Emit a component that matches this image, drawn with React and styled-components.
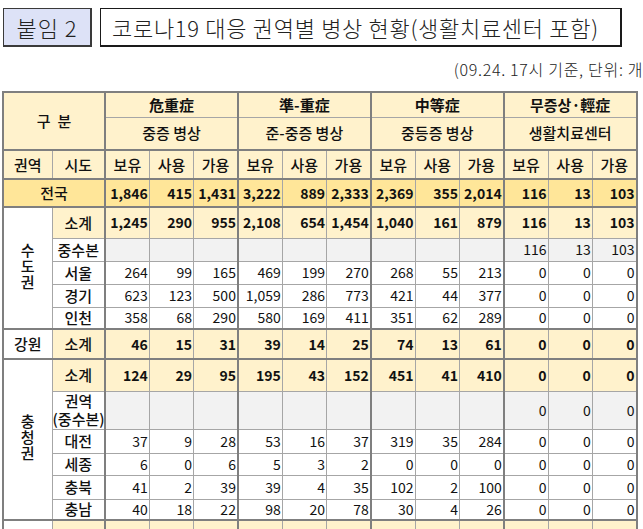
import styled, { createGlobalStyle } from 'styled-components';

const GlobalStyle = createGlobalStyle`
  html, body {
    margin: 0;
    padding: 0;
    background: #fff;
    overflow: hidden;
  }
  body {
    font-family: "Noto Sans CJK KR", "Noto Sans", sans-serif;
    color: #000;
  }
`;

const Page = styled.div`
  width: 643px;
  height: 529px;
  overflow: hidden;
`;

const TitleBar = styled.div`
  display: flex;
  gap: 8px;
  padding: 8px 0 0 3px;
`;

const Tag = styled.div`
  width: 89px;
  height: 39px;
  box-sizing: border-box;
  background: #dde2f7;
  border: 1px solid #3a3a3a;
  border-right-width: 2px;
  border-bottom-width: 2px;
  display: flex;
  align-items: center;
  justify-content: center;
  font-size: 22px;
  font-weight: 300;
  color: #222;
  letter-spacing: 1px;
`;

const Title = styled.div`
  width: 522px;
  height: 39px;
  box-sizing: border-box;
  background: #fff;
  border: 1px solid #1a1a1a;
  border-right-width: 2px;
  border-bottom-width: 2px;
  display: flex;
  align-items: center;
  padding-left: 11px;
  font-size: 22px;
  font-weight: 300;
  color: #222;
  letter-spacing: 0.7px;
  white-space: nowrap;
`;

const Note = styled.div`
  height: 44px;
  display: flex;
  align-items: center;
  justify-content: flex-end;
  margin-right: -6px;
  box-sizing: border-box;
  font-size: 16px;
  font-weight: 300;
  color: #222;
  white-space: nowrap;
  letter-spacing: 0.7px;
`;

const Table = styled.table`
  margin-left: 2px;
  border-collapse: collapse;
  table-layout: fixed;
  width: 634px;
  border: 2px solid #7f7f7f;
`;

const Col = styled.col`
  width: ${({ $w }) => $w}px;
`;

const Row = styled.tr`
  height: ${({ $h }) => $h}px;
`;

const BG = {
  head: '#fff2cc',
  total: '#ffe699',
  sub: '#fff2cc',
  hq: '#f2f2f2',
  plain: '#ffffff',
};

const Cell = styled.td`
  padding: 0 ${({ $num }) => ($num ? '1px' : '0')} 0 0;
  border: 1px solid #a6a6a6;
  border-left: ${({ $gl }) => ($gl ? '2px solid #7f7f7f' : '1px solid #a6a6a6')};
  border-top: ${({ $gt }) => ($gt ? '2px solid #7f7f7f' : '1px solid #a6a6a6')};
  background: ${({ $bg }) => BG[$bg || 'plain']};
  text-align: ${({ $num }) => ($num ? 'right' : 'center')};
  font-size: ${({ $num }) => ($num ? '14px' : '15px')};
  font-weight: ${({ $b, $num }) => ($b ? 700 : $num ? 400 : 500)};
  line-height: 1.2;
  white-space: nowrap;
  overflow: visible;
  color: #111;
`;

const VerticalName = styled.span`
  writing-mode: vertical-lr;
  text-orientation: upright;
  letter-spacing: 1px;
  line-height: 1;
`;

const TwoLine = styled.span`
  display: inline-block;
  line-height: 18px;
  white-space: pre;
`;

const GROUPS = [
  { han: '危重症', ko: '중증 병상' },
  { han: '準-重症', ko: '준-중증 병상' },
  { han: '中等症', ko: '중등증 병상' },
  { han: '무증상·輕症', ko: '생활치료센터' },
];

const blank9 = Array(9).fill('');

const REGIONS = [
  {
    name: '수도권',
    vertical: true,
    rows: [
      { label: '소계', kind: 'sub', h: 31, v: ['1,245', '290', '955', '2,108', '654', '1,454', '1,040', '161', '879', '116', '13', '103'] },
      { label: '중수본', kind: 'hq', h: 23, v: [...blank9, '116', '13', '103'] },
      { label: '서울', h: 23, v: ['264', '99', '165', '469', '199', '270', '268', '55', '213', '0', '0', '0'] },
      { label: '경기', h: 23, v: ['623', '123', '500', '1,059', '286', '773', '421', '44', '377', '0', '0', '0'] },
      { label: '인천', h: 22, v: ['358', '68', '290', '580', '169', '411', '351', '62', '289', '0', '0', '0'] },
    ],
  },
  {
    name: '강원',
    rows: [
      { label: '소계', kind: 'sub', h: 30, v: ['46', '15', '31', '39', '14', '25', '74', '13', '61', '0', '0', '0'] },
    ],
  },
  {
    name: '충청권',
    vertical: true,
    rows: [
      { label: '소계', kind: 'sub', h: 32, v: ['124', '29', '95', '195', '43', '152', '451', '41', '410', '0', '0', '0'] },
      { label: '권역\n(중수본)', kind: 'hq', h: 38, v: [...blank9, '0', '0', '0'] },
      { label: '대전', h: 24, v: ['37', '9', '28', '53', '16', '37', '319', '35', '284', '0', '0', '0'] },
      { label: '세종', h: 22, v: ['6', '0', '6', '5', '3', '2', '0', '0', '0', '0', '0', '0'] },
      { label: '충북', h: 24, v: ['41', '2', '39', '39', '4', '35', '102', '2', '100', '0', '0', '0'] },
      { label: '충남', h: 21, v: ['40', '18', '22', '98', '20', '78', '30', '4', '26', '0', '0', '0'] },
    ],
  },
  {
    name: '',
    rows: [{ label: '', kind: 'sub', h: 30, v: Array(12).fill('') }],
  },
];

function DataCells({ values, kind, bold, top }) {
  return values.map((val, i) => (
    <Cell key={i} $num $b={bold} $bg={kind === 'sub' ? 'sub' : kind} $gl={i % 3 === 0} $gt={top}>
      {val}
    </Cell>
  ));
}

export default function App() {
  return (
    <Page>
      <GlobalStyle />
      <TitleBar>
        <Tag>붙임 2</Tag>
        <Title>코로나19 대응 권역별 병상 현황(생활치료센터 포함)</Title>
      </TitleBar>
      <Note>(09.24. 17시 기준, 단위: 개)</Note>
      <Table>
        <colgroup>
          <Col $w={49} />
          <Col $w={53} />
          {Array.from({ length: 12 }, (_, i) => (
            <Col key={i} $w={44.3} />
          ))}
        </colgroup>
        <thead>
          <Row $h={25}>
            <Cell as="th" colSpan={2} rowSpan={2} $bg="head">
              구&nbsp;&nbsp;분
            </Cell>
            {GROUPS.map(g => (
              <Cell as="th" key={g.han} colSpan={3} $bg="head" $gl $b>
                {g.han}
              </Cell>
            ))}
          </Row>
          <Row $h={33}>
            {GROUPS.map(g => (
              <Cell as="th" key={g.ko} colSpan={3} $bg="head" $gl>
                {g.ko}
              </Cell>
            ))}
          </Row>
          <Row $h={29}>
            <Cell as="th" $bg="head" $gt>
              권역
            </Cell>
            <Cell as="th" $bg="head" $gt>
              시도
            </Cell>
            {Array.from({ length: 12 }, (_, i) => (
              <Cell as="th" key={i} $bg="head" $gl={i % 3 === 0} $gt>
                {['보유', '사용', '가용'][i % 3]}
              </Cell>
            ))}
          </Row>
        </thead>
        <tbody>
          <Row $h={28}>
            <Cell colSpan={2} $bg="total" $gt>
              전국
            </Cell>
            <DataCells
              values={['1,846', '415', '1,431', '3,222', '889', '2,333', '2,369', '355', '2,014', '116', '13', '103']}
              kind="total"
              bold
              top
            />
          </Row>
          {REGIONS.map((reg, ri) =>
            reg.rows.map((r, i) => (
              <Row key={`${ri}-${i}`} $h={r.h}>
                {i === 0 && (
                  <Cell rowSpan={reg.rows.length} $gt>
                    {reg.vertical ? <VerticalName>{reg.name}</VerticalName> : reg.name}
                  </Cell>
                )}
                <Cell $bg={r.kind === 'sub' ? 'sub' : 'plain'} $gt={i === 0}>
                  {r.label.includes('\n') ? <TwoLine>{r.label}</TwoLine> : r.label}
                </Cell>
                <DataCells values={r.v} kind={r.kind || 'plain'} bold={r.kind === 'sub'} top={i === 0} />
              </Row>
            ))
          )}
        </tbody>
      </Table>
    </Page>
  );
}
